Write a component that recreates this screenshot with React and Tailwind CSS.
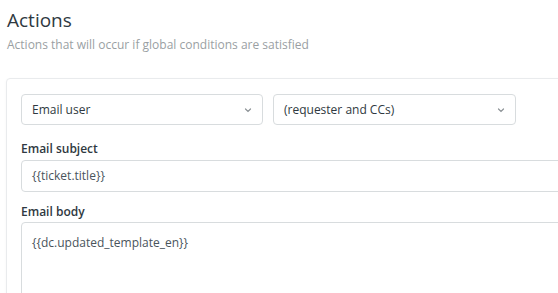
import React from 'react';

const Chevron = () => (
  <svg width="10" height="10" viewBox="0 0 10 10" className="text-[#8c9296]">
    <path d="M2.5 4 L5 6.5 L7.5 4" fill="none" stroke="currentColor" strokeWidth="1.2" strokeLinecap="round" />
  </svg>
);

// Dropdown-like select box
const Select = ({ value, width }) => (
  <div
    className={`flex items-center justify-between h-[31px] ${width} rounded-[4px] border border-[#d8dcde] bg-white pl-[10px] pr-[9px]`}
  >
    <span className="text-[12px] text-[#2f3941]">{value}</span>
    <Chevron />
  </div>
);

const App = () => {
  return (
    <div
      className="w-[558px] h-[293px] overflow-hidden bg-white pl-[7px]"
      style={{ fontFamily: '"Open Sans", "Noto Sans", sans-serif' }}
    >
      {/* Header */}
      <div className="pt-[7px]">
        <h2 className="text-[19px] leading-[26px] text-[#2f3941]">Actions</h2>
        <p className="mt-[4px] text-[12px] leading-[16px] text-[#9a9fa3]">
          Actions that will occur if global conditions are satisfied
        </p>
      </div>

      {/* Card */}
      <div className="mt-[25px] -ml-[1px] w-[600px] h-[260px] rounded-[4px] border border-[#e9ebed] bg-white shadow-[0_1px_3px_rgba(0,0,0,0.04)] pt-[15px] pl-[14px]">
        <div className="flex gap-[10px]">
          <Select value="Email user" width="w-[242px]" />
          <Select value="(requester and CCs)" width="w-[243px]" />
        </div>

        <label className="block mt-[15px] text-[12px] font-semibold leading-[18px] text-[#2f3941]">
          Email subject
        </label>
        <div className="mt-[2px] h-[32px] rounded-[4px] border border-[#d8dcde] flex items-center pl-[10px]">
          <span className="text-[12px] text-[#49545c]">{'{{ticket.title}}'}</span>
        </div>

        <label className="block mt-[11px] text-[12px] font-semibold leading-[18px] text-[#2f3941]">
          Email body
        </label>
        <div className="mt-[1px] h-[120px] rounded-[4px] border border-[#d8dcde] pl-[10px] pt-[6px]">
          <span className="text-[12px] text-[#49545c]">{'{{dc.updated_template_en}}'}</span>
        </div>
      </div>
    </div>
  );
};

export default App;
